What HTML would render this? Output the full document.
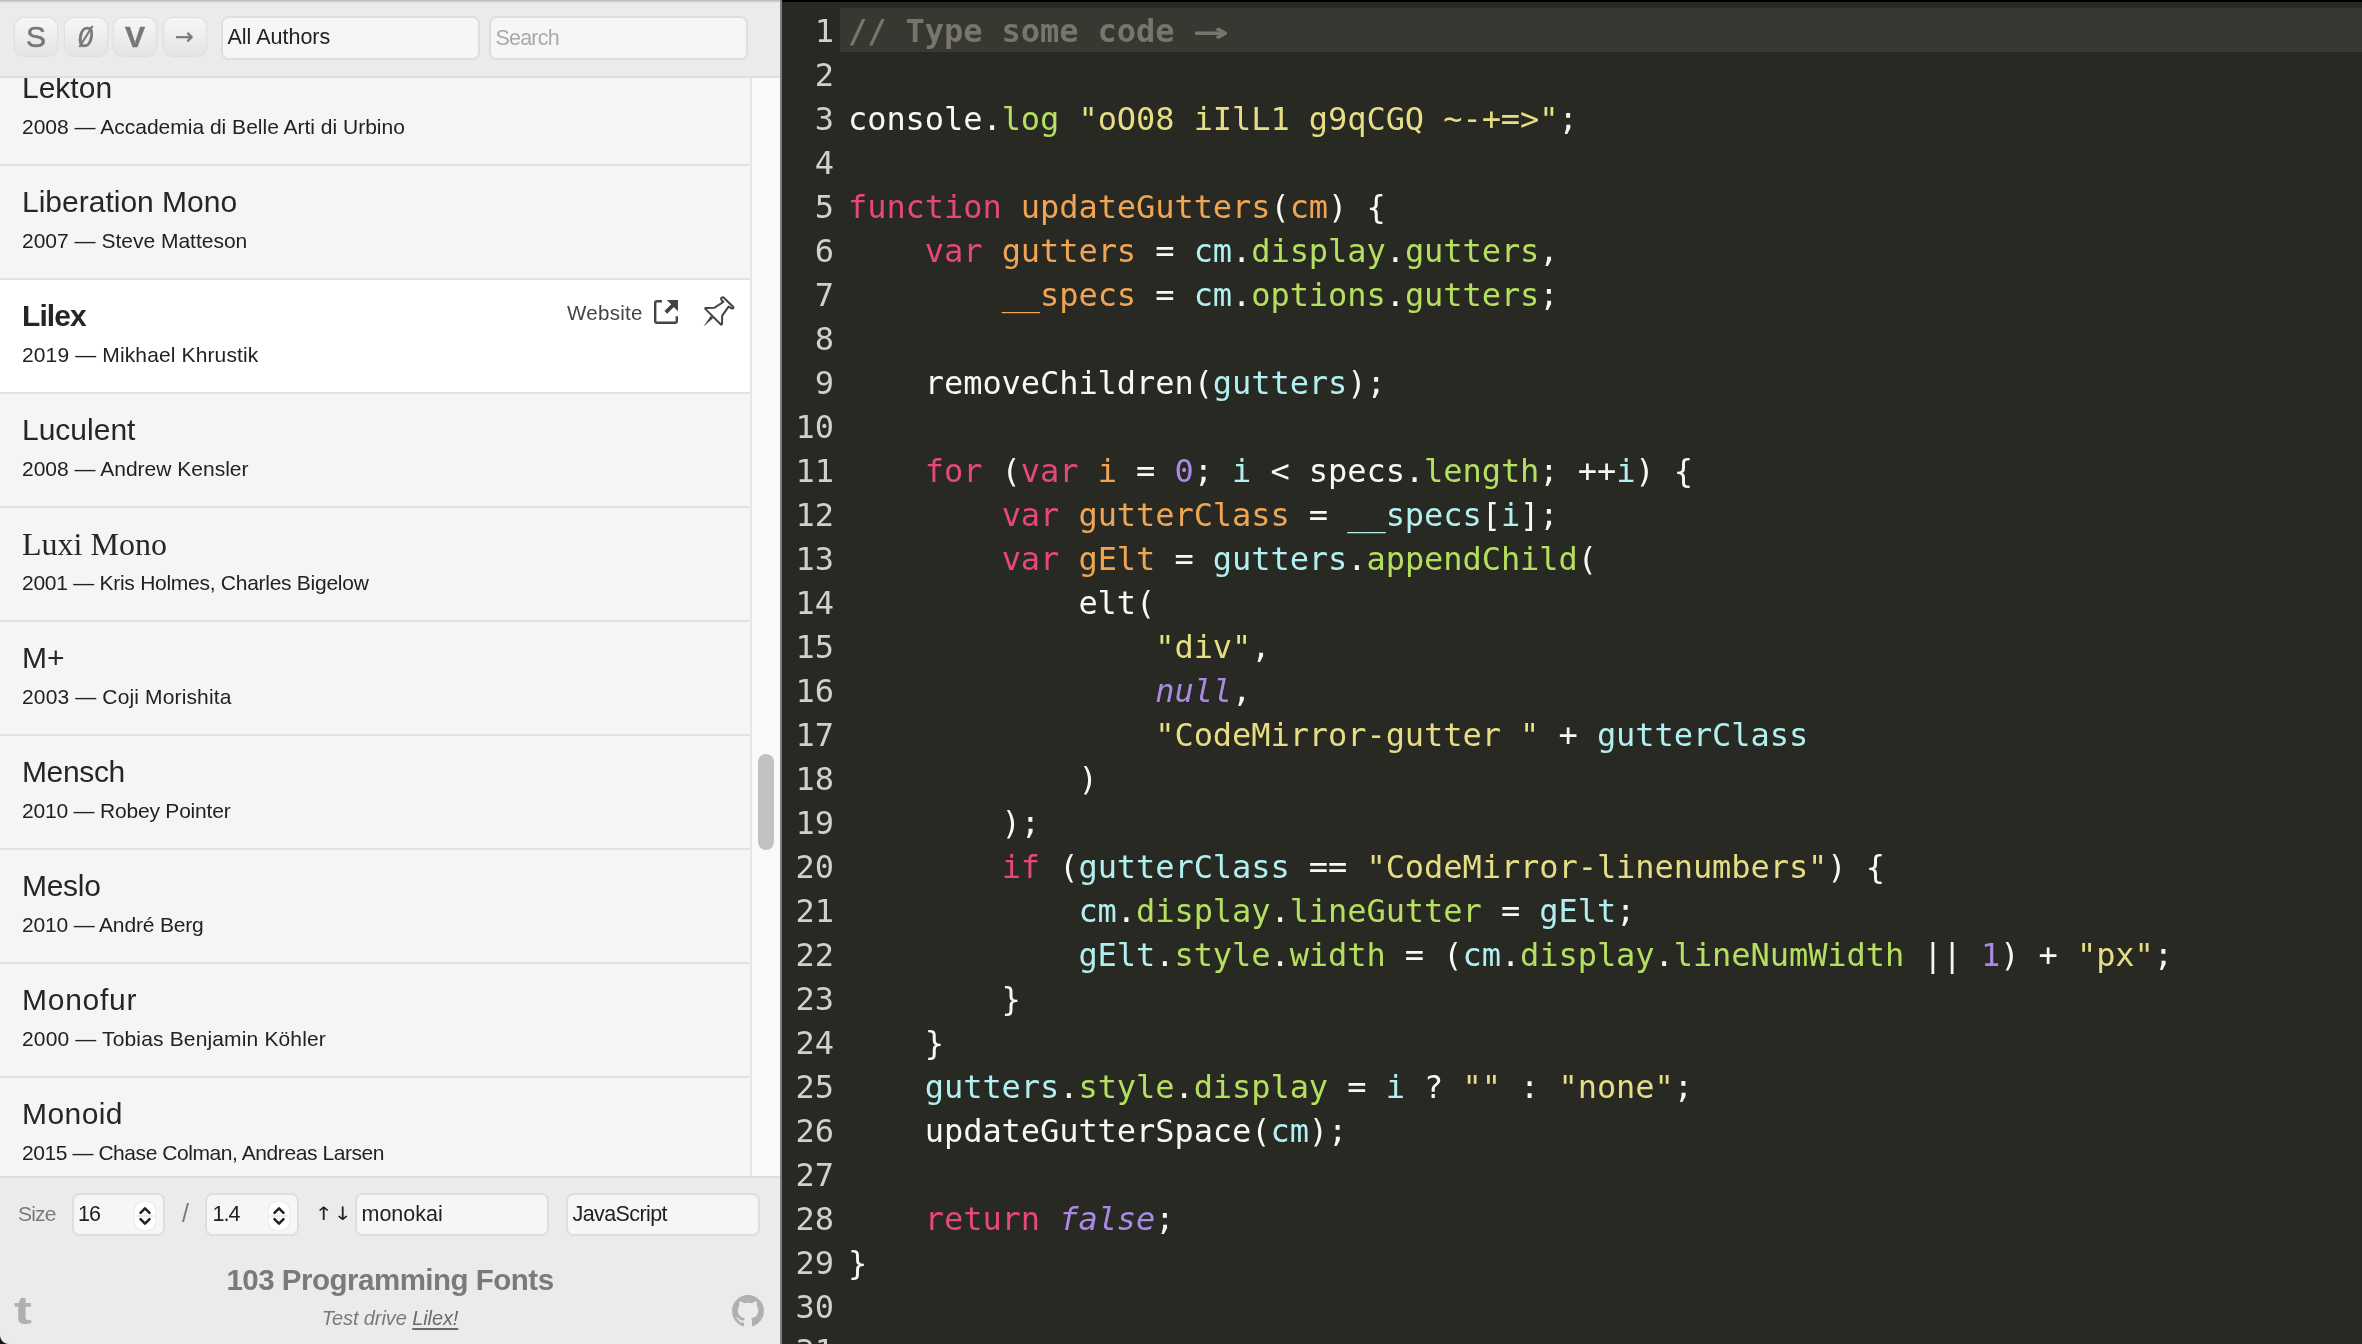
<!DOCTYPE html>
<html lang="en">
<head>
<meta charset="utf-8">
<title>Programming Fonts - Test Drive</title>
<style>
*{box-sizing:border-box;margin:0;padding:0}
html,body{width:2362px;height:1344px;overflow:hidden;background:#282923}
@media (max-width:1500px){html{zoom:.5}}
body{position:relative;font-family:"Liberation Sans",sans-serif;color:#222}
#side{will-change:transform;position:absolute;left:0;top:0;width:780px;height:1344px;background:#ebebeb;overflow:hidden}
#sideborder{position:absolute;left:780px;top:0;width:2px;height:1344px;background:#7e7e7e}
#head{position:absolute;left:0;top:0;width:780px;height:78px;background:#ebebeb;border-bottom:2px solid #dfdfdf;z-index:3}
#head:before{content:"";position:absolute;left:0;top:0;width:780px;height:3px;background:linear-gradient(#b5b5b5,#ebebeb)}
.btn{position:absolute;top:17.5px;-webkit-text-stroke:.5px #777;width:42px;height:38px;border-radius:9px;background:linear-gradient(#f7f7f7,#e4e4e4);box-shadow:0 0 2px rgba(0,0,0,.18);color:#777;text-align:center;font-size:30px;line-height:38px}
.zero i{display:inline-block;transform:scaleX(.92)}
.zero:after{content:"";position:absolute;left:20px;top:6.5px;width:2.2px;height:25px;background:#777;transform:rotate(32deg)}
.box{position:absolute;border:2px solid #dedede;border-radius:7.5px;background:#f6f6f6;font-size:21.5px;color:#222;white-space:nowrap}
#list{position:absolute;left:0;top:78px;width:752px;height:1098px;overflow:hidden;background:#f5f5f5;border-right:2px solid #e6e6e6}
#track{position:absolute;left:752px;top:78px;width:28px;height:1098px;background:#fafafa}
#thumb{position:absolute;left:758px;top:754px;width:16px;height:96px;border-radius:8px;background:#c1c1c1}
.it{position:absolute;left:0;width:750px;height:114px;border-top:2px solid #e2e2e2;background:#f5f5f5}
.it.sel{background:#fff}
.it h2{position:absolute;left:22px;top:14px;font-size:30px;line-height:44px;font-weight:normal;color:#262626;white-space:nowrap}
.it.sel h2{font-weight:bold}
.it p{position:absolute;left:22px;top:60px;font-size:21px;line-height:30px;color:#222;white-space:nowrap}
.web{position:absolute;left:567px;top:18px;font-size:20.5px;line-height:30px;color:#444;letter-spacing:.3px}
.ext{position:absolute;left:654px;top:20px}
.pin{position:absolute;left:703px;top:16px}
#foot{position:absolute;left:0;top:1176px;width:780px;height:168px;background:#ebebeb;border-top:2px solid #dcdcdc;z-index:3}
.lbl{position:absolute;font-size:21.5px;line-height:44px;color:#7a7a7a;white-space:nowrap}
.spin{position:absolute;width:20px;height:28px;border-radius:7px;background:#fff;box-shadow:0 0 1px rgba(0,0,0,.25)}
.spin svg{display:block}
#foot h1{position:absolute;left:0;top:82px;width:780px;text-align:center;font-size:29.5px;line-height:40px;font-weight:bold;color:#7a7a7a;letter-spacing:-0.5px}
#foot .td{position:absolute;left:0;top:125px;width:780px;text-align:center;font-size:20px;line-height:30px;letter-spacing:-.1px;font-style:italic;color:#7a7a7a}
#foot .td u{color:#6a6a6a;text-underline-offset:3px;text-decoration-thickness:1.5px}
.tum{position:absolute;left:13.5px;top:108.5px;font:bold 39px/48px "Liberation Sans",sans-serif;color:#b0b0b0;transform:scaleX(1.38);transform-origin:0 0}
.corner{position:absolute;left:0;bottom:0;width:9px;height:9px;background:radial-gradient(circle at 100% 0,rgba(0,0,0,0) 8.5px,#15151f 9.5px)}
.gh{position:absolute;left:732px;top:116.5px}
#ed{will-change:transform;position:absolute;left:782px;top:0;width:1580px;height:1344px;background:#282923;overflow:hidden;font-family:"DejaVu Sans Mono","Liberation Mono",monospace;font-size:32px;line-height:44px;color:#f8f8f2}
#ed:before{content:"";position:absolute;left:0;top:0;width:1580px;height:1.5px;background:#000;z-index:2}
#active{position:absolute;left:58px;top:8px;width:1522px;height:44px;background:#373831}
#nums{position:absolute;left:0;top:9px;width:52px;text-align:right;color:#d0d0d0;white-space:pre}
#code{position:absolute;left:66px;top:9px;white-space:pre;letter-spacing:-0.064px}
#nums div,#code div{height:44px}
.ar{display:inline-block;width:38.4px;transform:scaleX(1.85);transform-origin:1px 50%}
.c{color:#78766a;font-weight:bold}.k{color:#e6477d}.d{color:#f0a555}.v2{color:#b2f0f0}.p{color:#b5e05f}.s{color:#e6dd85}.n{color:#a98be6}.a{color:#a98be6;font-style:italic}
</style>
</head>
<body>
<div id="side">
  <div id="head">
    <div class="btn" style="left:15px">S</div>
    <div class="btn zero" style="left:64.5px"><i>0</i></div>
    <div class="btn" style="left:114px;font-weight:bold">V</div>
    <div class="btn" style="left:163.5px;font-family:'DejaVu Sans',sans-serif;font-size:22px">→</div>
    <div class="box" style="left:220.5px;top:16px;width:259px;height:43.5px;line-height:39px;padding-left:5px">All Authors</div>
    <div class="box" style="left:488.5px;top:16px;width:259px;height:43.5px;line-height:41.4px;padding-left:5px;color:#aaa;letter-spacing:-.8px">Search</div>
  </div>
  <div id="list">
    <div class="it" style="top:-28px"><h2>Lekton</h2><p>2008 — Accademia di Belle Arti di Urbino</p></div>
    <div class="it" style="top:86px"><h2>Liberation Mono</h2><p>2007 — Steve Matteson</p></div>
    <div class="it sel" style="top:200px"><h2 style="letter-spacing:-0.9px">Lilex</h2><p style="letter-spacing:.13px">2019 — Mikhael Khrustik</p><span class="web">Website</span><svg class="ext" width="24" height="24" viewBox="0 0 24 24"><path d="M8 1.2H3Q1.2 1.2 1.2 3V21Q1.2 22.8 3 22.8H21Q22.8 22.8 22.8 21V16.2" fill="none" stroke="#444" stroke-width="2.4"/><path d="M12.8 0H24V11.2Z" fill="#444"/><path d="M11.8 12.4L19.5 4.7" stroke="#444" stroke-width="3.8"/></svg><svg class="pin" width="32" height="32" viewBox="0 0 32 32"><path d="M20.3 1.3L30.1 10.7Q31 12.5 29.2 12.6L25.6 10.6L19.2 19.6L19 27.6Q18.8 29.4 17.6 28.2L2.8 13.4Q1.4 12 3.2 11.9L11.6 11.7L20.3 6L18.6 4.2Q17.6 2.4 18.8 1.6Q19.6 1 20.3 1.3Z" fill="none" stroke="#444" stroke-width="2" stroke-linejoin="round"/><path d="M7.9 19.7L10.3 22.1L.3 30.7Z" fill="#444"/></svg></div>
    <div class="it" style="top:314px"><h2>Luculent</h2><p>2008 — Andrew Kensler</p></div>
    <div class="it" style="top:428px"><h2 style="font-family:'Liberation Serif',serif;font-size:32px">Luxi Mono</h2><p style="letter-spacing:-.27px">2001 — Kris Holmes, Charles Bigelow</p></div>
    <div class="it" style="top:542px"><h2>M+</h2><p style="letter-spacing:.14px">2003 — Coji Morishita</p></div>
    <div class="it" style="top:656px"><h2 style="letter-spacing:-.37px">Mensch</h2><p style="letter-spacing:-.2px">2010 — Robey Pointer</p></div>
    <div class="it" style="top:770px"><h2 style="letter-spacing:-.28px">Meslo</h2><p style="letter-spacing:-.17px">2010 — André Berg</p></div>
    <div class="it" style="top:884px"><h2 style="letter-spacing:.74px">Monofur</h2><p style="letter-spacing:.15px">2000 — Tobias Benjamin Köhler</p></div>
    <div class="it" style="top:998px"><h2 style="letter-spacing:.43px">Monoid</h2><p style="letter-spacing:-.43px">2015 — Chase Colman, Andreas Larsen</p></div>
  </div>
  <div id="track"></div>
  <div id="thumb"></div>
  <div id="foot">
    <div class="lbl" style="left:18px;top:14px;font-size:21px;letter-spacing:-.8px">Size</div>
    <div class="box" style="left:71.5px;top:15px;width:93px;height:43px;line-height:38.6px;padding-left:4.5px;letter-spacing:-1px">16</div>
    <div class="spin" style="left:135px;top:24px"><svg width="20" height="28" viewBox="0 0 20 28"><path d="M5.5 10.8 L10 6.3 L14.5 10.8 M5.5 17.2 L10 21.7 L14.5 17.2" fill="none" stroke="#222" stroke-width="2.6" stroke-linecap="round" stroke-linejoin="round"/><path d="M1 14H19" stroke="#d8d8d8" stroke-width="1"/></svg></div>
    <div class="lbl" style="left:182px;top:13px;font-size:25px">/</div>
    <div class="box" style="left:205px;top:15px;width:93.5px;height:43px;line-height:38.6px;padding-left:5.5px;letter-spacing:-1px">1.4</div>
    <div class="spin" style="left:269px;top:24px"><svg width="20" height="28" viewBox="0 0 20 28"><path d="M5.5 10.8 L10 6.3 L14.5 10.8 M5.5 17.2 L10 21.7 L14.5 17.2" fill="none" stroke="#222" stroke-width="2.6" stroke-linecap="round" stroke-linejoin="round"/><path d="M1 14H19" stroke="#d8d8d8" stroke-width="1"/></svg></div>
    <div class="lbl" style="left:314.5px;top:14px;color:#222;font-family:'DejaVu Sans',sans-serif;font-size:22px;letter-spacing:.5px;transform:scaleY(.84)">↑↓</div>
    <div class="box" style="left:354.5px;top:15px;width:194px;height:43px;line-height:38.6px;padding-left:5px">monokai</div>
    <div class="box" style="left:565.5px;top:15px;width:194px;height:43px;line-height:38.6px;padding-left:5px;letter-spacing:-.6px">JavaScript</div>
    <h1>103 Programming Fonts</h1>
    <p class="td">Test drive <u>Lilex!</u></p>
    <div class="tum">t</div>
    <div class="corner"></div>
    <svg class="gh" width="32" height="32" viewBox="0 0 16 16"><path fill="#b0b0b0" d="M8 0C3.58 0 0 3.58 0 8c0 3.54 2.29 6.53 5.47 7.59.4.07.55-.17.55-.38 0-.19-.01-.82-.01-1.49-2.01.37-2.53-.49-2.69-.94-.09-.23-.48-.94-.82-1.13-.28-.15-.68-.52-.01-.53.63-.01 1.08.58 1.23.82.72 1.21 1.87.87 2.33.66.07-.52.28-.87.51-1.07-1.78-.2-3.64-.89-3.64-3.95 0-.87.31-1.59.82-2.15-.08-.2-.36-1.02.08-2.12 0 0 .67-.21 2.2.82.64-.18 1.32-.27 2-.27s1.36.09 2 .27c1.53-1.04 2.2-.82 2.2-.82.44 1.1.16 1.92.08 2.12.51.56.82 1.27.82 2.15 0 3.07-1.87 3.75-3.65 3.95.29.25.54.73.54 1.48 0 1.07-.01 1.93-.01 2.2 0 .21.15.46.55.38A8.01 8.01 0 0 0 16 8c0-4.42-3.58-8-8-8z"/></svg>
  </div>
</div>
<div id="sideborder"></div>
<div id="ed">
  <div id="active"></div>
  <div id="nums"><div>1</div><div>2</div><div>3</div><div>4</div><div>5</div><div>6</div><div>7</div><div>8</div><div>9</div><div>10</div><div>11</div><div>12</div><div>13</div><div>14</div><div>15</div><div>16</div><div>17</div><div>18</div><div>19</div><div>20</div><div>21</div><div>22</div><div>23</div><div>24</div><div>25</div><div>26</div><div>27</div><div>28</div><div>29</div><div>30</div><div>31</div></div>
  <div id="code"><div><span class="c">// Type some code <span class="ar">→</span></span></div><div></div><div>console.<span class="p">log</span> <span class="s">"oO08 iIlL1 g9qCGQ ~-+=&gt;"</span>;</div><div></div><div><span class="k">function</span> <span class="d">updateGutters</span>(<span class="d">cm</span>) {</div><div>    <span class="k">var</span> <span class="d">gutters</span> = <span class="v2">cm</span>.<span class="p">display</span>.<span class="p">gutters</span>,</div><div>        <span class="d">__specs</span> = <span class="v2">cm</span>.<span class="p">options</span>.<span class="p">gutters</span>;</div><div></div><div>    removeChildren(<span class="v2">gutters</span>);</div><div></div><div>    <span class="k">for</span> (<span class="k">var</span> <span class="d">i</span> = <span class="n">0</span>; <span class="v2">i</span> &lt; specs.<span class="p">length</span>; ++<span class="v2">i</span>) {</div><div>        <span class="k">var</span> <span class="d">gutterClass</span> = <span class="v2">__specs</span>[<span class="v2">i</span>];</div><div>        <span class="k">var</span> <span class="d">gElt</span> = <span class="v2">gutters</span>.<span class="p">appendChild</span>(</div><div>            elt(</div><div>                <span class="s">"div"</span>,</div><div>                <span class="a">null</span>,</div><div>                <span class="s">"CodeMirror-gutter "</span> + <span class="v2">gutterClass</span></div><div>            )</div><div>        );</div><div>        <span class="k">if</span> (<span class="v2">gutterClass</span> == <span class="s">"CodeMirror-linenumbers"</span>) {</div><div>            <span class="v2">cm</span>.<span class="p">display</span>.<span class="p">lineGutter</span> = <span class="v2">gElt</span>;</div><div>            <span class="v2">gElt</span>.<span class="p">style</span>.<span class="p">width</span> = (<span class="v2">cm</span>.<span class="p">display</span>.<span class="p">lineNumWidth</span> || <span class="n">1</span>) + <span class="s">"px"</span>;</div><div>        }</div><div>    }</div><div>    <span class="v2">gutters</span>.<span class="p">style</span>.<span class="p">display</span> = <span class="v2">i</span> ? <span class="s">""</span> : <span class="s">"none"</span>;</div><div>    updateGutterSpace(<span class="v2">cm</span>);</div><div></div><div>    <span class="k">return</span> <span class="a">false</span>;</div><div>}</div><div></div><div></div></div>
</div>
</body>
</html>
